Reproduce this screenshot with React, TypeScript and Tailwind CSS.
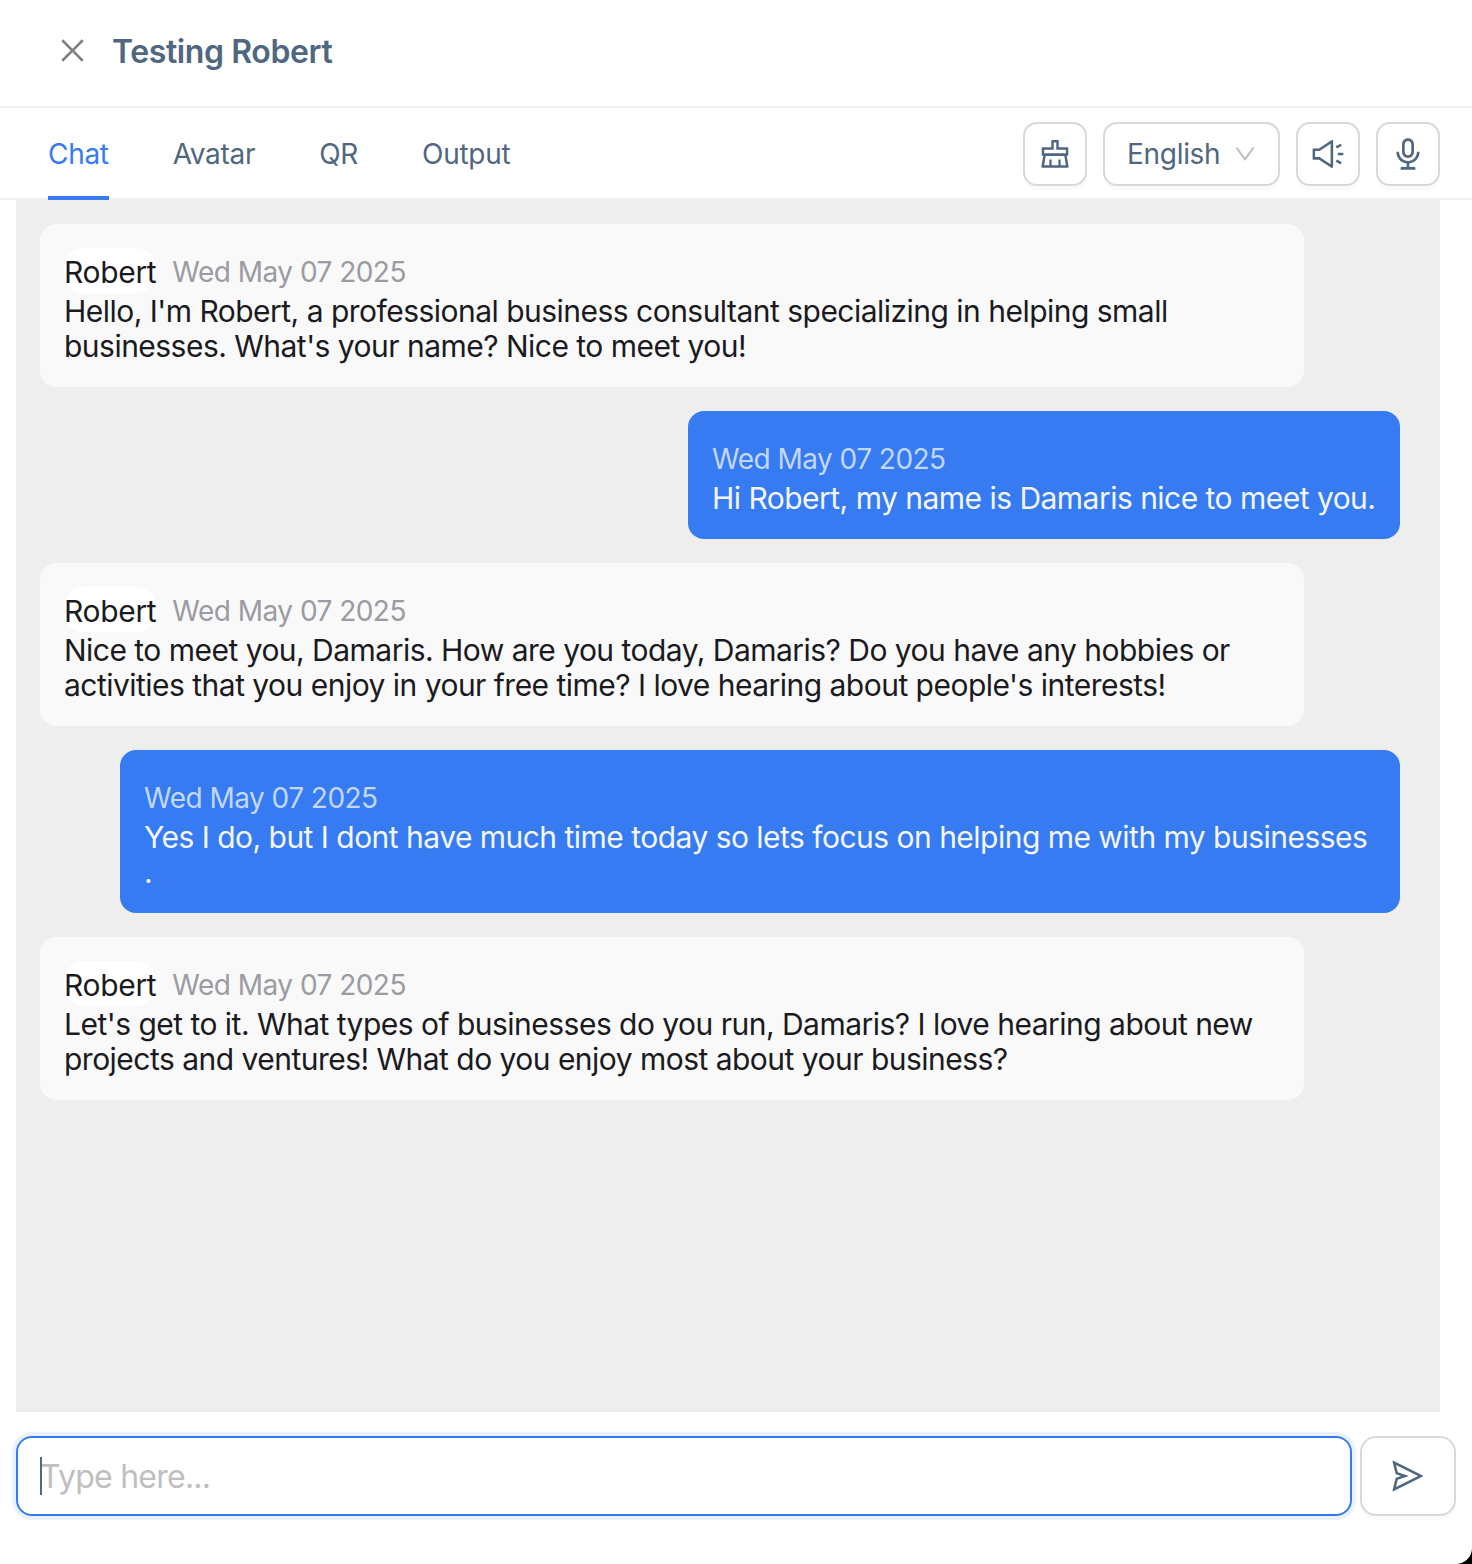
import { AiOutlineAudio, AiOutlineClear, AiOutlineClose, AiOutlineDown, AiOutlineSend, AiOutlineSound } from "react-icons/ai";

const DATE = "Wed May 07 2025";

const BotBubble = ({ text }: { text: string }) => {
  return (
    <div className="w-[1264px] rounded-[16px] bg-[#f9f9f9] px-6 pb-[23px] pt-6 text-[30px] leading-[35px] tracking-[-0.52px] text-[#1a1a1f]">
      <div className="flex h-[46px] items-start">
        <span className="flex h-[45px] items-center rounded-[20px] bg-white pt-[3px] tracking-[-0.33px]">Robert</span>
        <span className="ml-4 flex h-[45px] items-center pt-[3px] text-[28px] text-[#9b9ba3]">{DATE}</span>
      </div>
      <p>{text}</p>
    </div>
  );
};

const UserBubble = ({ text, dot }: { text: string; dot?: boolean }) => {
  return (
    <div className={dot ? "w-[1280px] self-end rounded-[16px] bg-[#367bf1] px-6 pb-[23px] pt-6 text-[30px] leading-[35px] tracking-[-0.52px] text-[#f3f6fc]" : "w-[712px] self-end rounded-[16px] bg-[#367bf1] px-6 pb-[23px] pt-6 text-[30px] leading-[35px] tracking-[-0.52px] text-[#f3f6fc]"}>
      <div className="flex h-[46px] items-start">
        <span className="flex h-[45px] items-center pt-[3px] text-[28px] text-[#c3d7fa]">{DATE}</span>
      </div>
      <p>{text}</p>
      {dot && <p>.</p>}
    </div>
  );
};

const IconButton = ({ children }: { children: React.ReactNode }) => {
  return (
    <button className="flex h-16 w-16 items-center justify-center rounded-[14px] border-2 border-[#d9d9d9] bg-white text-[#4f6780] shadow-[0_4px_0_rgba(0,0,0,0.02)]">
      {children}
    </button>
  );
};

export default function App() {
  return (
    <div className="h-[1564px] w-[1472px] overflow-hidden bg-black font-['Inter',sans-serif]">
      <div className="flex h-full flex-col rounded-br-[16px] bg-white">
        <header className="flex h-[108px] shrink-0 items-center border-b-2 border-[#f0f0f0] pb-[2px] pl-[56px]">
          <AiOutlineClose className="mb-1 text-[33px] text-[#808080]" />
          <h1 className="ml-[23px] text-[32px] font-semibold tracking-[-0.4px] text-[#4f6780]">Testing Robert</h1>
        </header>

        <nav className="flex h-[92px] shrink-0 items-center justify-between border-b-2 border-[#f0f0f0] pl-12 pr-8 pt-[2px]">
          <div className="flex h-full items-center gap-[64px] text-[28px] tracking-[-0.3px] text-[#4f6780]">
            <div className="relative flex h-full items-center text-[#367bf1]">
              Chat
              <div className="absolute inset-x-0 bottom-[-2px] h-1 bg-[#367bf1]" />
            </div>
            <div>Avatar</div>
            <div>QR</div>
            <div>Output</div>
          </div>
          <div className="flex items-center gap-4">
            <IconButton><AiOutlineClear className="text-[36px]" /></IconButton>
            <button className="flex h-16 w-[177px] items-center rounded-[14px] border-2 border-[#d9d9d9] bg-white pl-[22px] text-[28px] tracking-[-0.3px] text-[#4f6780] shadow-[0_4px_0_rgba(0,0,0,0.02)]">
              English
              <AiOutlineDown className="ml-[12px] text-[26px] text-[#bfbfbf]" />
            </button>
            <IconButton><AiOutlineSound className="text-[36px]" /></IconButton>
            <IconButton><AiOutlineAudio className="text-[36px]" /></IconButton>
          </div>
        </nav>

        <main className="ml-4 flex h-[1212px] w-[1424px] shrink-0 flex-col gap-6 bg-[#eeeeee] py-6 pl-6 pr-10">
          <BotBubble text="Hello, I'm Robert, a professional business consultant specializing in helping small businesses. What's your name? Nice to meet you!" />
          <UserBubble text="Hi Robert, my name is Damaris nice to meet you." />
          <BotBubble text="Nice to meet you, Damaris. How are you today, Damaris? Do you have any hobbies or activities that you enjoy in your free time? I love hearing about people's interests!" />
          <UserBubble text="Yes I do, but I dont have much time today so lets focus on helping me with my businesses" dot />
          <BotBubble text="Let's get to it. What types of businesses do you run, Damaris? I love hearing about new projects and ventures! What do you enjoy most about your business?" />
        </main>

        <div className="mt-6 flex gap-2 px-4">
          <div className="relative flex h-20 w-[1336px] items-center rounded-[16px] border-2 border-[#367bf1] bg-white pl-[22px] shadow-[0_0_0_4px_#e9f2fe]">
            <input
              placeholder="Type here..."
              className="h-full w-full bg-transparent text-[32px] tracking-[-0.75px] text-[#4f6780] outline-none placeholder:text-[#bfbfbf]"
            />
            <div className="absolute left-[22px] top-[19px] h-[38px] w-[2px] bg-[#4f6780]" />
          </div>
          <button className="flex h-20 w-24 items-center justify-center rounded-[16px] border-2 border-[#d9d9d9] bg-white text-[#4f6780] shadow-[0_4px_0_rgba(0,0,0,0.02)]">
            <AiOutlineSend className="text-[36px]" />
          </button>
        </div>
      </div>
    </div>
  );
}
